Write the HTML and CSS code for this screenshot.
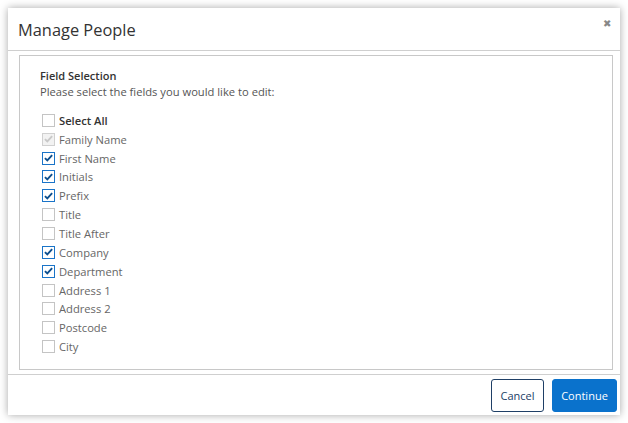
FILE: index.html
```html
<!DOCTYPE html>
<html>
<head>
<meta charset="utf-8">
<link rel="stylesheet" href="styles.css">
</head>
<body>
<div class="page">
  <div class="modal">
    <div class="modal-header">
      <h1 class="modal-title">Manage People</h1>
      <span class="close">&#x2716;</span>
    </div>
    <div class="modal-body">
      <div class="panel">
        <div class="panel-title">Field Selection</div>
        <div class="panel-desc">Please select the fields you would like to edit:</div>
        <ul class="fields">
          <li class="field bold"><span class="cb"></span>Select All</li>
          <li class="field"><span class="cb disabled"><svg viewBox="0 0 13 13"><path d="M2.3 6.6 L5.1 9.4 L10.8 3" /></svg></span>Family Name</li>
          <li class="field"><span class="cb checked"><svg viewBox="0 0 13 13"><path d="M2.3 6.6 L5.1 9.4 L10.8 3" /></svg></span>First Name</li>
          <li class="field"><span class="cb checked"><svg viewBox="0 0 13 13"><path d="M2.3 6.6 L5.1 9.4 L10.8 3" /></svg></span>Initials</li>
          <li class="field"><span class="cb checked"><svg viewBox="0 0 13 13"><path d="M2.3 6.6 L5.1 9.4 L10.8 3" /></svg></span>Prefix</li>
          <li class="field"><span class="cb"></span>Title</li>
          <li class="field"><span class="cb"></span>Title After</li>
          <li class="field"><span class="cb checked"><svg viewBox="0 0 13 13"><path d="M2.3 6.6 L5.1 9.4 L10.8 3" /></svg></span>Company</li>
          <li class="field"><span class="cb checked"><svg viewBox="0 0 13 13"><path d="M2.3 6.6 L5.1 9.4 L10.8 3" /></svg></span>Department</li>
          <li class="field"><span class="cb"></span>Address 1</li>
          <li class="field"><span class="cb"></span>Address 2</li>
          <li class="field"><span class="cb"></span>Postcode</li>
          <li class="field"><span class="cb"></span>City</li>
        </ul>
      </div>
    </div>
    <div class="modal-footer">
      <button class="btn btn-cancel">Cancel</button>
      <button class="btn btn-primary">Continue</button>
    </div>
  </div>
</div>
</body>
</html>
```
FILE: styles.css
```css
html, body {
  margin: 0;
  padding: 0;
  background: #ffffff;
  font-family: "Open Sans", "Noto Sans", sans-serif;
}
.page {
  padding: 8px;
}
.modal {
  width: 612px;
  height: 407px;
  background: #fff;
  box-shadow: 0 0 8px rgba(0,0,0,0.35);
  display: flex;
  flex-direction: column;
  box-sizing: border-box;
}
.modal-header {
  height: 42px;
  border-bottom: 1px solid #cfcfcf;
  display: flex;
  align-items: center;
  justify-content: space-between;
  padding: 0 10px 0 10px;
  flex: none;
}
.modal-title {
  margin: 0;
  font-size: 16.4px;
  font-weight: 400;
  color: #333;
  margin-top: 1px;
}
.close {
  font-size: 10px;
  color: #888;
  align-self: flex-start;
  margin-top: 8px;
  margin-right: -1px;
}
.modal-body {
  padding: 4px 7px 4px 11px;
  flex: none;
}
.panel {
  border: 1px solid #c8c8c8;
  height: 315px;
  padding: 12px 20px 0 20px;
  box-sizing: border-box;
}
.panel-title {
  font-size: 11px;
  font-weight: 600;
  color: #333;
  line-height: 16px;
}
.panel-desc {
  font-size: 11.2px;
  color: #555;
  line-height: 15px;
}
.fields {
  list-style: none;
  margin: 12px 0 0 2px;
  padding: 0;
}
.field {
  height: 18.85px;
  display: flex;
  align-items: center;
  font-size: 11.2px;
  color: #666;
}
.field.bold {
  font-weight: 600;
  color: #333;
}
.cb {
  width: 13px;
  height: 13px;
  border: 1px solid #c4c4c4;
  box-sizing: border-box;
  background: #fff;
  margin-right: 4px;
  display: flex;
  align-items: center;
  justify-content: center;
}
.cb svg {
  width: 12px;
  height: 12px;
  fill: none;
  stroke-width: 2.2;
}
.cb.checked {
  border-color: #1a74c8;
}
.cb.checked svg {
  stroke: #0d4f8e;
}
.cb.disabled {
  border-color: #d0d0d0;
  background: #f2f2f2;
}
.cb.disabled svg {
  stroke: #c8c8c8;
}
.modal-footer {
  border-top: 1px solid #cfcfcf;
  flex: 1;
  display: flex;
  justify-content: flex-end;
  align-items: flex-start;
  padding: 4px 3px 0 0;
  gap: 8px;
}
.btn {
  height: 33px;
  font-family: "Open Sans", "Noto Sans", sans-serif;
  font-size: 11px;
  border-radius: 3px;
  padding: 0;
  cursor: pointer;
}
.btn-cancel {
  width: 53px;
  background: #fff;
  color: #1a3e66;
  border: 1px solid #1f3f66;
}
.btn-primary {
  width: 65px;
  background: #0a72cc;
  color: #fff;
  border: 1px solid #0a72cc;
}
```
